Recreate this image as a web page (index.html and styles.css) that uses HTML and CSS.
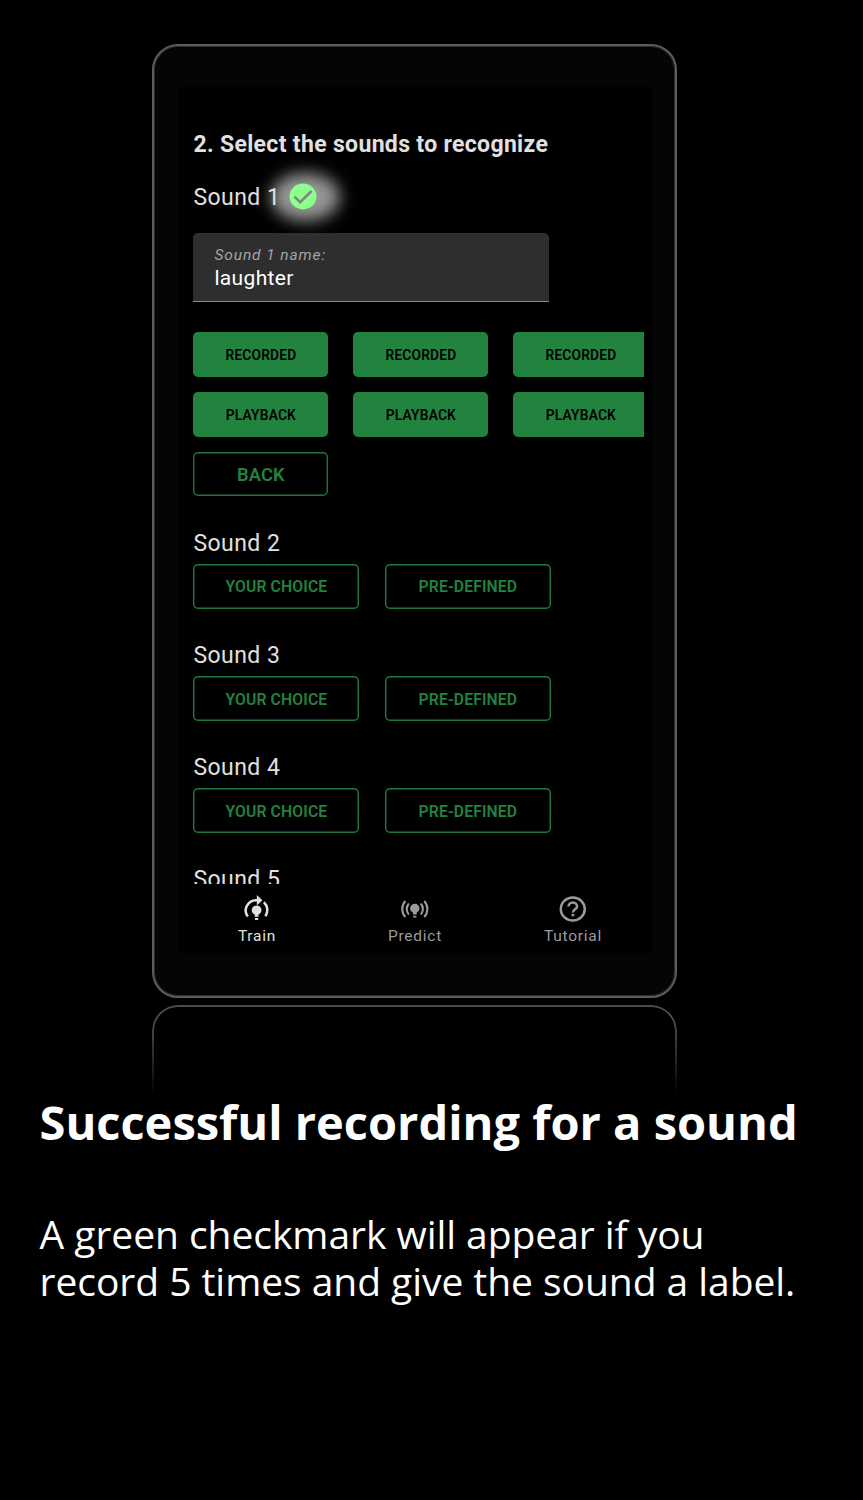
FILE: index.html
```html
<!DOCTYPE html>
<html lang="en">
<head>
<meta charset="utf-8">
<title>Successful recording for a sound</title>
<link rel="stylesheet" href="styles.css">
</head>
<body>
<div class="device">
  <main class="screen">
    <div class="content">
      <h2 class="heading"><span>2. Select the sounds to recognize</span></h2>
      <div class="sound-title first"><span class="label">Sound 1</span>
        <span class="status">
          <svg width="28" height="27" viewBox="0 0 28 27"><ellipse cx="14" cy="13.5" rx="13.5" ry="12.9" fill="#8dff8d"/><path d="M5.4 13.6l5.8 5.6L22.6 8" fill="none" stroke="#858585" stroke-width="2.7"/></svg>
        </span>
      </div>
      <div class="field"><span class="field-label">Sound 1 name:</span><span class="field-value">laughter</span></div>
      <div class="samples">
        <div class="row"><div class="btn solid"><span>RECORDED</span></div><div class="btn solid"><span>RECORDED</span></div><div class="btn solid"><span>RECORDED</span></div></div>
        <div class="row"><div class="btn solid"><span>PLAYBACK</span></div><div class="btn solid"><span>PLAYBACK</span></div><div class="btn solid"><span>PLAYBACK</span></div></div>
        <div class="row"><div class="btn back"><span>BACK</span></div></div>
      </div>
      <section class="sound"><div class="sound-title"><span class="label">Sound 2</span></div><div class="row"><div class="btn choice"><span>YOUR CHOICE</span></div><div class="btn choice"><span>PRE-DEFINED</span></div></div></section>
      <section class="sound"><div class="sound-title"><span class="label">Sound 3</span></div><div class="row"><div class="btn choice"><span>YOUR CHOICE</span></div><div class="btn choice"><span>PRE-DEFINED</span></div></div></section>
      <section class="sound"><div class="sound-title"><span class="label">Sound 4</span></div><div class="row"><div class="btn choice"><span>YOUR CHOICE</span></div><div class="btn choice"><span>PRE-DEFINED</span></div></div></section>
      <section class="sound"><div class="sound-title"><span class="label">Sound 5</span></div></section>
    </div>
    <nav class="tabs">
      <div class="tab active">
        <svg width="28" height="28" viewBox="0 0 28 28"><g fill="none" stroke="currentColor" stroke-width="2.5"><path d="M4.8 21.4A10.8 10.2 0 0 1 14 5.2"/><path d="M20.8 7.2A10.6 10.6 0 0 1 22.4 21.2"/></g><path d="M13.8 0l5.6 5.2-5.6 5.2z" fill="currentColor"/><path d="M13.6 10.4a4.9 4.8 0 0 1 4.9 4.8c0 1.9-1.2 3.3-3 4.4v2.1h-3.8v-2.1c-1.8-1.1-3-2.5-3-4.4a4.9 4.8 0 0 1 4.9-4.8zM12 23.1h3.2v1.9H12z" fill="currentColor"/></svg>
        <span>Train</span>
      </div>
      <div class="tab">
        <svg width="28" height="28" viewBox="0 0 28 28"><g fill="none" stroke="currentColor" stroke-width="2.1"><path d="M4.3 6a12 12 0 0 0 0 16M7.9 8.5a8 8 0 0 0 0 11M23.3 6a12 12 0 0 1 0 16M19.7 8.5a8 8 0 0 1 0 11"/></g><path d="M13.8 8.8a4.7 4.6 0 0 1 4.7 4.6c0 1.8-1.1 3.2-2.8 4.2v2h-3.8v-2c-1.7-1-2.8-2.4-2.8-4.2a4.7 4.6 0 0 1 4.7-4.6zM12.2 20.8h3.2v1.7h-3.2z" fill="currentColor"/></svg>
        <span>Predict</span>
      </div>
      <div class="tab">
        <svg width="28" height="28" viewBox="0 0 28 28"><ellipse cx="13.8" cy="14" rx="12" ry="11.5" fill="none" stroke="currentColor" stroke-width="2.5"/><path d="M9.5 11.4a4.3 4 0 0 1 8.6 0c0 2.6-4.2 3-4.2 6" fill="none" stroke="currentColor" stroke-width="2.5"/><path d="M12.6 18.9h2.7v2.4h-2.7z" fill="currentColor"/></svg>
        <span>Tutorial</span>
      </div>
    </nav>
  </main>
</div>
<div class="reflection"></div>
<h1 class="title"><span>Successful recording for a sound</span></h1>
<p class="text"><span>A green checkmark will appear if you</span><br><span>record 5 times and give the sound a label.</span></p>
</body>
</html>
```
FILE: styles.css
```css
* { box-sizing: border-box; }
html { background: #000; }
body { margin: 0; width: 863px; height: 1500px; padding-top: 44px; overflow: hidden; background: #000; color: #fff; font-family: Roboto, sans-serif; }
h1, h2, p { margin: 0; }
.device { width: 525px; height: 954px; margin-left: 152px; padding: 41px 24px; border: 2px solid #5c5c5c; border-radius: 26px; background: #050505; box-shadow: inset 0 0 0 1px #2c2c2c; }
.screen { width: 474px; height: 866px; background: #000; display: flex; flex-direction: column; }
.content { height: 797px; width: 466px; padding: 42.4px 0 0 15.4px; overflow: hidden; }
.heading { font-size: 23px; font-weight: 700; line-height: 32px; letter-spacing: .33px; color: #e0e0e0; white-space: nowrap; }
.sound-title { display: flex; align-items: center; height: 32px; font-size: 23px; color: #e0e0e0; letter-spacing: .45px; }
.first { margin-top: 20.6px; gap: 8.8px; }
.status { position: relative; width: 28px; height: 27px; display: flex; margin-top: -3px; }
.status::before { content: ""; position: absolute; left: -18px; top: -10px; width: 69px; height: 48px; border-radius: 50%; background: #969696; filter: blur(8px); }
.status svg { position: relative; }
.first .label { position: relative; z-index: 1; }
.field { margin-top: 19.4px; width: 356px; height: 68.6px; padding: 11.4px 21px 0; display: flex; flex-direction: column; background: #2e2e2e; border-radius: 5px 5px 0 0; border-bottom: 1.5px solid #8c8c8c; }
.field-label { font-size: 15.5px; font-style: italic; line-height: 20px; letter-spacing: .9px; color: #a4a4a4; }
.field-value { font-size: 21px; line-height: 26px; letter-spacing: .35px; }
.samples { margin-top: 30.2px; display: flex; flex-direction: column; gap: 15px; }
.row { display: flex; gap: 25px; }
.btn { flex: none; width: 135px; height: 44.7px; display: flex; align-items: center; justify-content: center; border-radius: 5px; font-size: 13.8px; font-weight: 600; letter-spacing: .15px; padding-top: 1px; }
.solid { background: #22833f; color: #000; }
.back { box-shadow: inset 0 0 0 1.4px #1f753a; color: #22833f; font-size: 18.3px; }
.samples + .sound { margin-top: 30.8px; }
.sound { height: 112.2px; }
.sound .row { margin-top: 5px; gap: 25.5px; }
.choice { width: 166px; box-shadow: inset 0 0 0 1.4px #1f7a3b; color: #22833f; font-size: 15.7px; }
.tabs { height: 69px; display: grid; grid-template-columns: repeat(3, 1fr); }
.tab { display: flex; flex-direction: column; align-items: center; padding-top: 11px; color: #9b9b9b; font-size: 15.5px; letter-spacing: .75px; }
.tab span { line-height: 20px; margin-top: 3px; }
.active { color: #e0e0e0; }
.reflection { width: 525px; height: 90px; margin: 7px 0 0 152px; border: 2px solid #4c4c4c; border-bottom: 0; border-radius: 26px 26px 0 0; -webkit-mask-image: linear-gradient(#000, #000 20%, transparent); mask-image: linear-gradient(#000, #000 20%, transparent); }
.title { margin: 0 0 0 39.5px; font: 700 47px/54px "Open Sans", sans-serif; white-space: nowrap; }
.text { margin: 61px 0 0 39.6px; font: 400 39px/47px "Open Sans", sans-serif; letter-spacing: -.05px; white-space: nowrap; }
```
